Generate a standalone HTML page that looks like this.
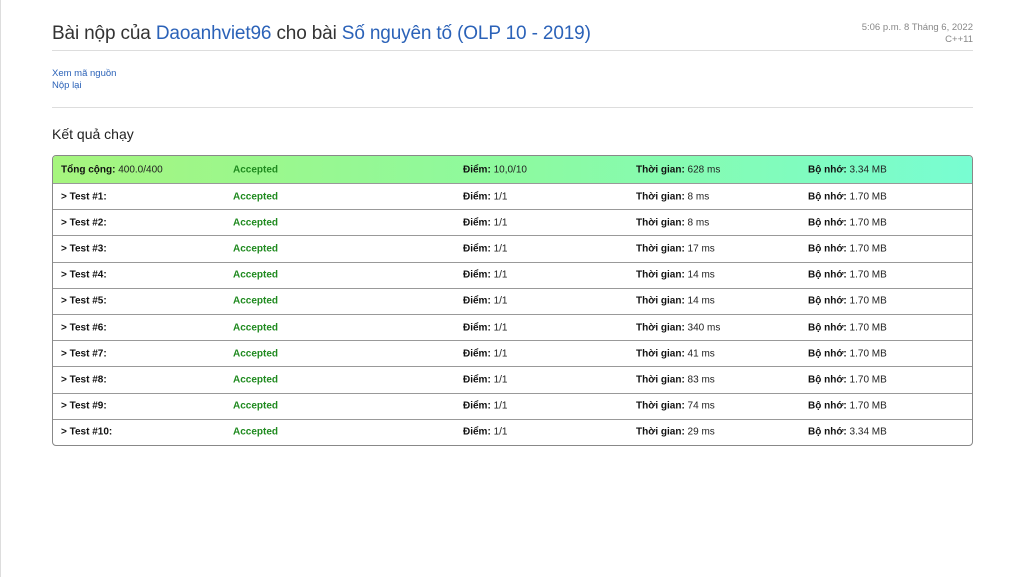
<!DOCTYPE html>
<html><head><meta charset="utf-8"><style>
body{margin:0;width:1024px;height:577px;background:#fff;font-family:"Liberation Sans","DejaVu Sans",sans-serif;color:#222;position:relative;overflow:hidden;border-left:1px solid #ddd;box-sizing:border-box}
.abs{position:absolute}
h1{position:absolute;left:51px;top:23px;margin:0;font-weight:normal;font-size:19px;letter-spacing:-0.15px;color:#333;white-space:nowrap}
a{color:#2b62b8;text-decoration:none}
.meta{right:51px;top:22px;text-align:right;font-size:9.5px;color:#888;line-height:12px}
.hr{left:51px;width:921px;height:1px;background:#ddd}
.links{left:51px;top:68px;font-size:9.5px;line-height:11.5px}
h2{position:absolute;left:51px;top:126px;margin:0;font-weight:normal;font-size:14px;color:#222}
.tbl{left:51px;top:155px;width:919px;border:1px solid #888;border-radius:4px;overflow:hidden}
.row{position:relative;height:26.2px;border-top:1px solid #999;font-size:10px;box-sizing:border-box}
.row:first-child{border-top:none;height:27px;background:linear-gradient(90deg,#a6f57e,#8dfa9f 50%,#78fdd2)}
.row span{position:absolute;top:50%;transform:translateY(-50%);white-space:nowrap}
.c1{left:8px}.c2{left:180px;color:#1f8a1f;font-weight:bold}.c3{left:410px}.c4{left:583px}.c5{left:755px}
b{font-weight:bold;color:#111}
</style></head><body>
<h1>Bài nộp của <a>Daoanhviet96</a> cho bài <a>Số nguyên tố (OLP 10 - 2019)</a></h1>
<div class="abs meta">5:06 p.m. 8 Tháng 6, 2022<br>C++11</div>
<div class="abs hr" style="top:50px"></div>
<div class="abs links"><a>Xem mã nguồn</a><br><a>Nộp lại</a></div>
<div class="abs hr" style="top:107px"></div>
<h2>Kết quả chạy</h2>
<div class="abs tbl">
<div class="row"><span class="c1"><b>Tổng cộng:</b> 400.0/400</span><span class="c2">Accepted</span><span class="c3"><b>Điểm:</b> 10,0/10</span><span class="c4"><b>Thời gian:</b> 628 ms</span><span class="c5"><b>Bộ nhớ:</b> 3.34 MB</span></div>
<div class="row"><span class="c1"><b>&gt; Test #1:</b></span><span class="c2">Accepted</span><span class="c3"><b>Điểm:</b> 1/1</span><span class="c4"><b>Thời gian:</b> 8 ms</span><span class="c5"><b>Bộ nhớ:</b> 1.70 MB</span></div>
<div class="row"><span class="c1"><b>&gt; Test #2:</b></span><span class="c2">Accepted</span><span class="c3"><b>Điểm:</b> 1/1</span><span class="c4"><b>Thời gian:</b> 8 ms</span><span class="c5"><b>Bộ nhớ:</b> 1.70 MB</span></div>
<div class="row"><span class="c1"><b>&gt; Test #3:</b></span><span class="c2">Accepted</span><span class="c3"><b>Điểm:</b> 1/1</span><span class="c4"><b>Thời gian:</b> 17 ms</span><span class="c5"><b>Bộ nhớ:</b> 1.70 MB</span></div>
<div class="row"><span class="c1"><b>&gt; Test #4:</b></span><span class="c2">Accepted</span><span class="c3"><b>Điểm:</b> 1/1</span><span class="c4"><b>Thời gian:</b> 14 ms</span><span class="c5"><b>Bộ nhớ:</b> 1.70 MB</span></div>
<div class="row"><span class="c1"><b>&gt; Test #5:</b></span><span class="c2">Accepted</span><span class="c3"><b>Điểm:</b> 1/1</span><span class="c4"><b>Thời gian:</b> 14 ms</span><span class="c5"><b>Bộ nhớ:</b> 1.70 MB</span></div>
<div class="row"><span class="c1"><b>&gt; Test #6:</b></span><span class="c2">Accepted</span><span class="c3"><b>Điểm:</b> 1/1</span><span class="c4"><b>Thời gian:</b> 340 ms</span><span class="c5"><b>Bộ nhớ:</b> 1.70 MB</span></div>
<div class="row"><span class="c1"><b>&gt; Test #7:</b></span><span class="c2">Accepted</span><span class="c3"><b>Điểm:</b> 1/1</span><span class="c4"><b>Thời gian:</b> 41 ms</span><span class="c5"><b>Bộ nhớ:</b> 1.70 MB</span></div>
<div class="row"><span class="c1"><b>&gt; Test #8:</b></span><span class="c2">Accepted</span><span class="c3"><b>Điểm:</b> 1/1</span><span class="c4"><b>Thời gian:</b> 83 ms</span><span class="c5"><b>Bộ nhớ:</b> 1.70 MB</span></div>
<div class="row"><span class="c1"><b>&gt; Test #9:</b></span><span class="c2">Accepted</span><span class="c3"><b>Điểm:</b> 1/1</span><span class="c4"><b>Thời gian:</b> 74 ms</span><span class="c5"><b>Bộ nhớ:</b> 1.70 MB</span></div>
<div class="row"><span class="c1"><b>&gt; Test #10:</b></span><span class="c2">Accepted</span><span class="c3"><b>Điểm:</b> 1/1</span><span class="c4"><b>Thời gian:</b> 29 ms</span><span class="c5"><b>Bộ nhớ:</b> 3.34 MB</span></div>
</div>
</body></html>
